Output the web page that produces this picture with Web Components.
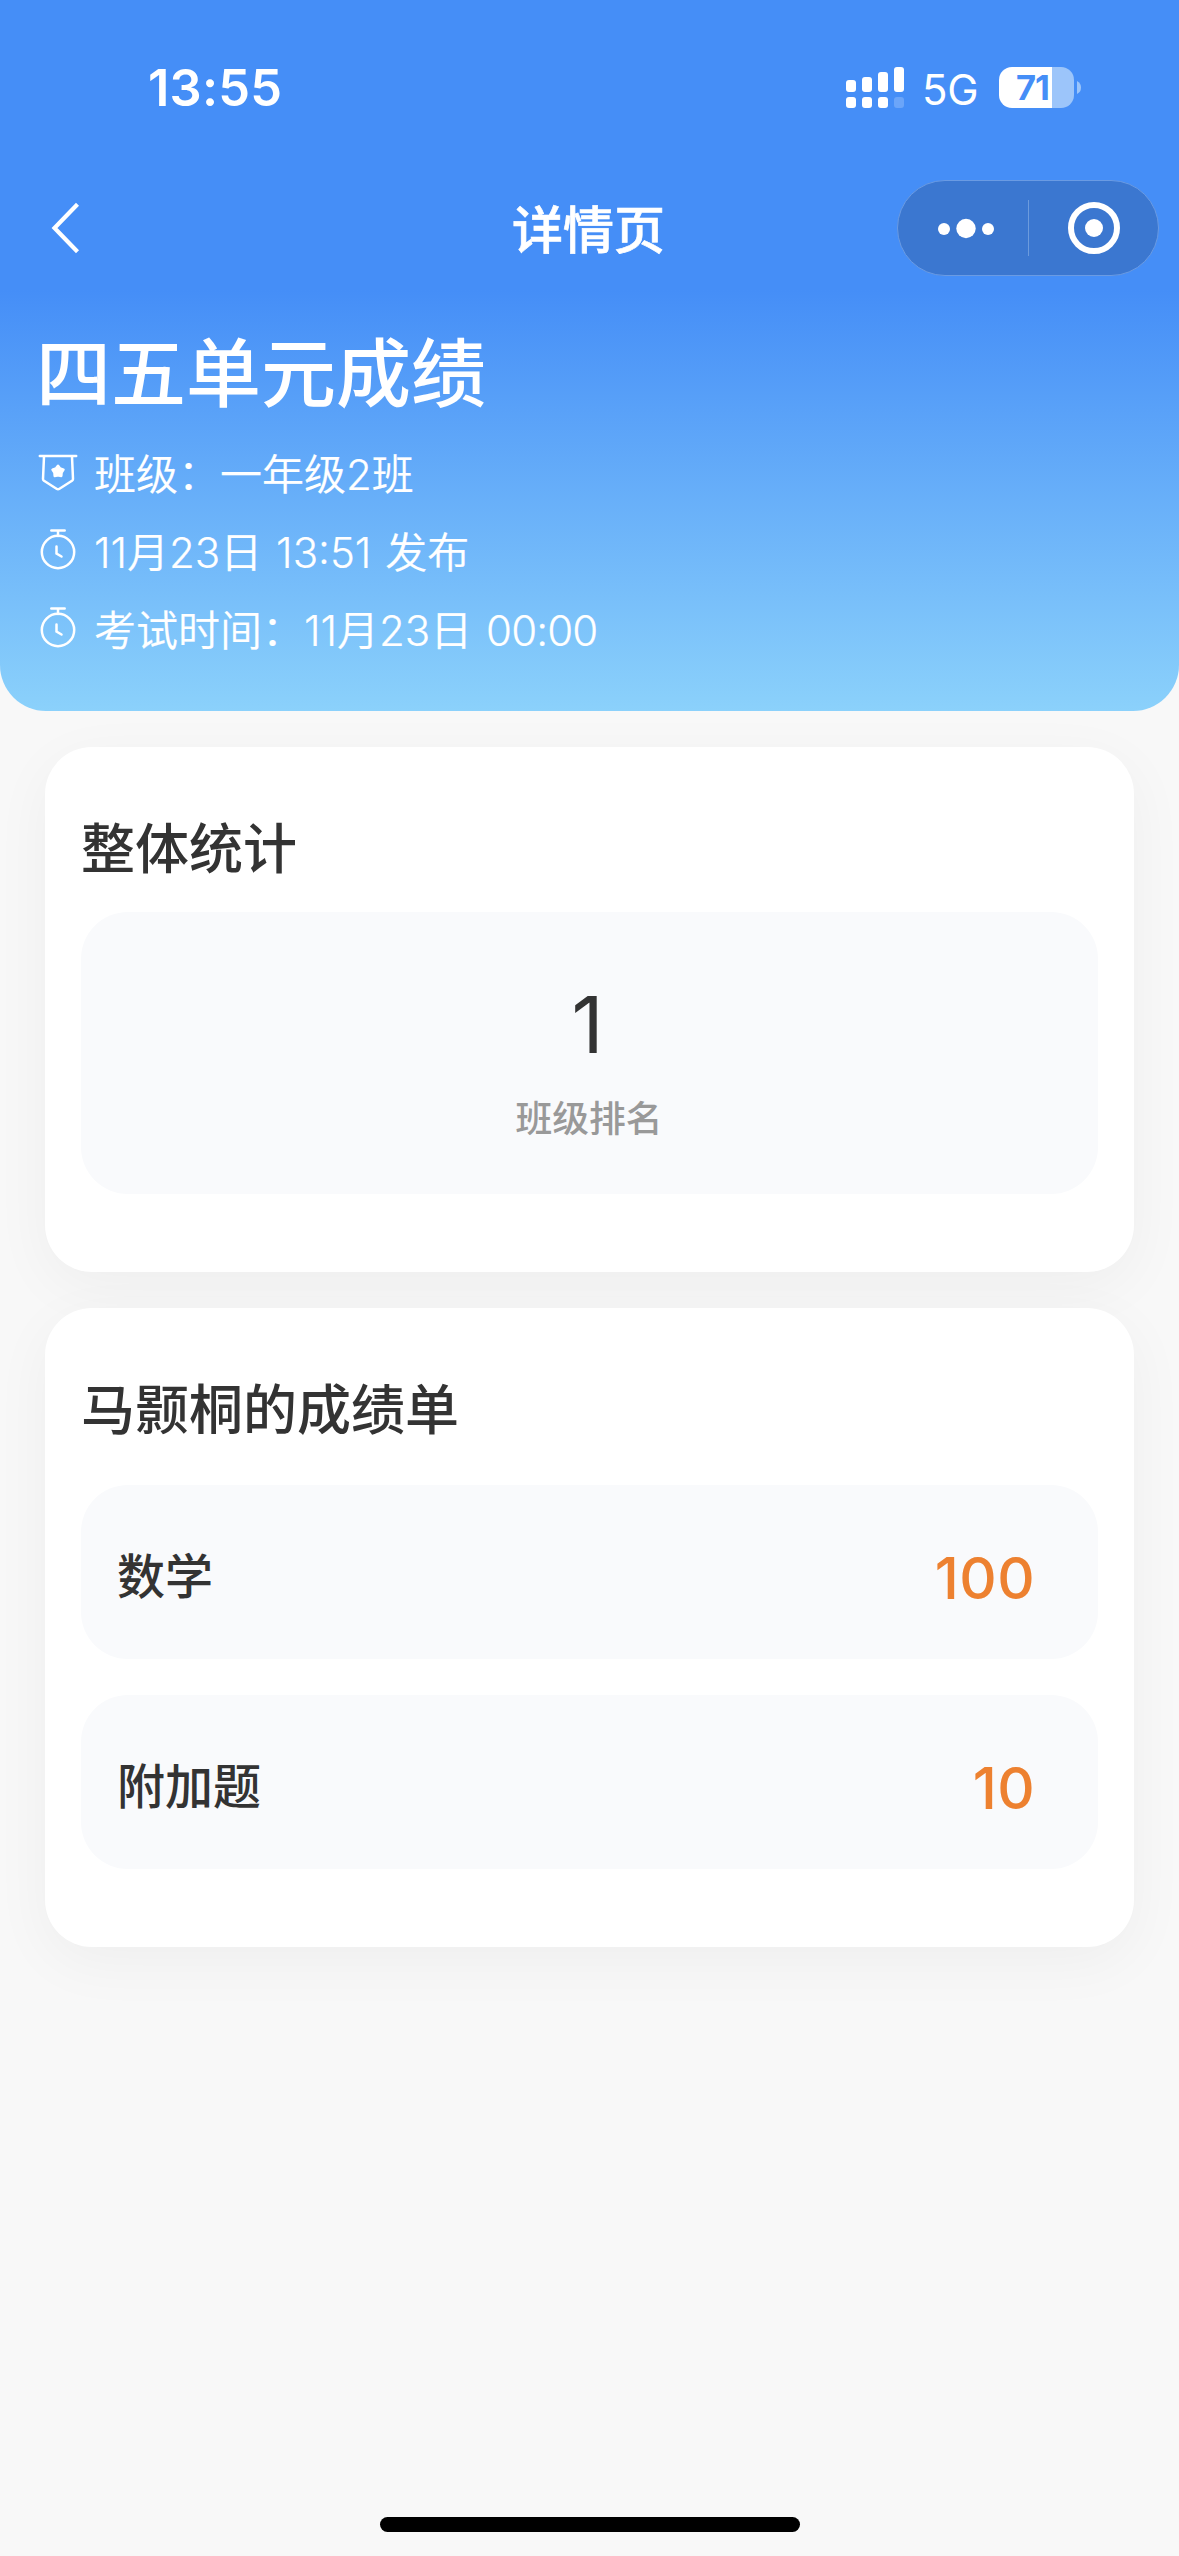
<!DOCTYPE html>
<html lang="zh-CN">
<head>
<meta charset="utf-8">
<title>详情页</title>
<style>
html,body{margin:0;padding:0;background:#f8f8f8}
body{font-family:Inter,"Noto Sans CJK SC",sans-serif;color:#333;width:1179px;height:2556px;overflow:hidden}
</style>
</head>
<body>
<score-page></score-page>
<script>
const define = (name, html) => customElements.define(name, class extends HTMLElement {
  constructor() {
    super();
    const t = document.createElement('template');
    t.innerHTML = html;
    this.attachShadow({mode: 'open'}).appendChild(t.content.cloneNode(true));
  }
});

define('status-bar', `
<style>
:host{display:flex;height:141px;box-sizing:border-box;padding:67px 98px 0 148px;justify-content:space-between;align-items:flex-start;color:#fff}
.time{font-size:50.5px;line-height:42px;font-weight:600;letter-spacing:.2px}
.right{display:flex;height:41px;align-items:flex-start}
.net{font-size:42px;line-height:46px;margin-left:18px;width:57px;letter-spacing:-.2px;white-space:nowrap}
.bat{margin-left:20px;width:75px;height:41px;border-radius:13px;background:linear-gradient(90deg,#fff 53px,#9cc5fa 53px);color:#458ef7;font-size:34.5px;line-height:42px;font-weight:700;box-sizing:border-box;padding-left:17px;letter-spacing:-1px}
svg{display:block}
.nub{margin:14px 0 0 3px}
</style>
<div class="time">13:55</div>
<div class="right">
<svg width="58" height="41" viewBox="0 0 58 41" fill="#fff"><rect x="0" y="13" width="10" height="12" rx="3"/><rect x="16" y="10" width="10" height="15" rx="3"/><rect x="32" y="5" width="10" height="20" rx="3"/><rect x="48" y="0" width="10" height="25" rx="3"/><rect x="0" y="30" width="10" height="11" rx="3"/><rect x="16" y="30" width="10" height="11" rx="3"/><rect x="32" y="30" width="10" height="11" rx="3"/><rect x="48" y="30" width="10" height="11" rx="3" fill="#6ba5f9"/></svg>
<div class="net">5G</div><div class="bat">71</div>
<svg class="nub" width="4" height="13" viewBox="0 0 4 13"><path d="M0 0Q4 2 4 6.500Q4 11 0 13z" fill="#9cc5fa"/></svg>
</div>`);

define('menu-capsule', `
<style>
:host{display:flex;width:262px;height:96px;box-sizing:border-box;border:1px solid #6a9be3;border-radius:48px;background:#3b77d0}
svg{display:block}
</style>
<svg width="260" height="94" viewBox="898 181 260 94" fill="#fff"><circle cx="944" cy="229" r="6"/><circle cx="966" cy="228.500" r="9.700"/><circle cx="988" cy="229" r="6"/><rect x="1028" y="200" width="1" height="56" fill="#6c9bdd"/><circle cx="1094" cy="228" r="9"/><circle cx="1094" cy="228" r="23" fill="none" stroke="#fff" stroke-width="6"/></svg>`);

define('nav-bar', `
<style>
:host{display:grid;grid-template-columns:461px auto 1fr;align-items:start;height:150px;padding:39px 20px 0 51px;color:#fff}
.back{display:block;margin-top:22px}
.title{font-size:51px;line-height:101px;height:96px;font-weight:500;-webkit-text-stroke:.7px #fff}
menu-capsule{justify-self:end}
</style>
<svg class="back" width="30" height="52" viewBox="0 0 30 52" fill="none" stroke="#fff" stroke-width="4.200"><path d="M26.500 2.300L3.500 26L26.500 49.700"/></svg>
<div class="title"><slot></slot></div>
<menu-capsule></menu-capsule>`);

const watch = `<svg width="40" height="42" viewBox="0 0 40 42" fill="none" stroke="#fff" stroke-width="2.500" stroke-linecap="round"><path d="M13.300 5.500H26.700M20 5.500V11M18.500 21.500V28.500L23.500 31.500"/><circle cx="20" cy="27" r="16.200"/></svg>`;
const badge = `<svg width="40" height="42" viewBox="0 0 40 42" fill="none" stroke="#fff" stroke-width="2.500" stroke-linecap="round" stroke-linejoin="round"><path d="M1.800 9H38.200M6 9.500L5 32Q5 33 6 33.800L18.500 41.700Q20 42.700 21.500 41.700L34 33.800Q35 33 35 32L34 9.500"/><path d="M20 18.700L22.100 21.500L25.500 22.700L23.600 25.700L23.300 29L20 28.300L16.700 29L16.400 25.700L14.500 22.700L17.900 21.500Z" fill="#fff"/></svg>`;

define('info-line', `
<style>
:host{display:flex;height:78px;align-items:flex-start;color:#fff;font-size:42px;line-height:79px;font-weight:350;white-space:pre}
.icon{width:40px;margin-right:16px}
.text{word-spacing:2px;-webkit-text-stroke:.2px #fff}
</style>
<div class="icon"><slot name="icon"></slot></div><div class="text"><slot></slot></div>`);
customElements.define('info-icon', class extends HTMLElement {
  constructor() {
    super();
    this.attachShadow({mode: 'open'}).innerHTML =
      `<style>:host{display:block;height:44px;padding-top:12px}svg{display:block;overflow:visible}</style>` +
      (this.getAttribute('kind') === 'badge' ? badge : watch);
  }
});

define('page-header', `
<style>
:host{display:block;height:711px;border-radius:0 0 46px 46px;background:linear-gradient(180deg,#458ef7 0,#458ef7 290px,#8bd1fb 711px)}
nav-bar{box-sizing:border-box}
h1{margin:0;padding:44px 0 0 36px;height:78px;font-size:75px;line-height:78px;font-weight:500;color:#fff}
.info{padding:22px 0 0 38px}
.n{letter-spacing:-.9px}
</style>
<status-bar></status-bar>
<nav-bar>详情页</nav-bar>
<h1>四五单元成绩</h1>
<div class="info">
<info-line><info-icon slot="icon" kind="badge"></info-icon>班级：一年级2班</info-line>
<info-line><info-icon slot="icon" kind="watch"></info-icon>11月23日 13:51 发布</info-line>
<info-line><info-icon slot="icon" kind="watch"></info-icon>考试时间：11月23日 <span class="n">00:00</span></info-line>
</div>`);

define('score-card', `
<style>
:host{display:flex;flex-direction:column;box-sizing:border-box;padding:62px 36px 78px;border-radius:47px;background:#fff;box-shadow:0 15px 60px rgba(0,0,0,.045)}
h2{margin:0;height:79px;font-size:54px;line-height:81px;font-weight:500;color:#333}
.body{display:flex;flex-direction:column;gap:36px;margin-top:var(--body-gap,24px)}
</style>
<h2><slot name="title"></slot></h2>
<div class="body"><slot></slot></div>`);

define('rank-box', `
<style>
:host{display:flex;flex-direction:column;align-items:center;box-sizing:border-box;height:282px;padding-top:72px;border-radius:47px;background:#f9fafc}
.v{margin-right:4px;font-size:79px;line-height:80px;font-weight:400;color:#333}
.l{margin:35px 1px 0 0;font-size:36.800px;line-height:40px;font-weight:500;color:#999}
</style>
<div class="v"><slot></slot></div><div class="l"><slot name="label"></slot></div>`);

define('score-row', `
<style>
:host{display:flex;justify-content:space-between;box-sizing:border-box;height:174px;padding:0 63px 0 36px;border-radius:47px;background:#f9fafc}
.k{font-size:48px;line-height:184px;font-weight:500;color:#333}
.v{font-size:58px;line-height:186px;font-weight:500;color:#ed8130;letter-spacing:.4px}
</style>
<div class="k"><slot name="subject"></slot></div><div class="v"><slot></slot></div>`);

define('score-page', `
<style>
:host{display:flex;flex-direction:column;height:2556px;background:#f8f8f8}
main{display:flex;flex-direction:column;gap:36px;padding:36px 45px 0}
.report{--body-gap:36px}
.home{width:420px;height:15px;border-radius:8px;background:#000;margin:auto auto 24px}
</style>
<page-header></page-header>
<main>
<score-card><span slot="title">整体统计</span><rank-box>1<span slot="label">班级排名</span></rank-box></score-card>
<score-card class="report"><span slot="title">马颢桐的成绩单</span>
<score-row><span slot="subject">数学</span>100</score-row>
<score-row><span slot="subject">附加题</span>10</score-row>
</score-card>
</main>
<div class="home"></div>`);
</script>
</body>
</html>
